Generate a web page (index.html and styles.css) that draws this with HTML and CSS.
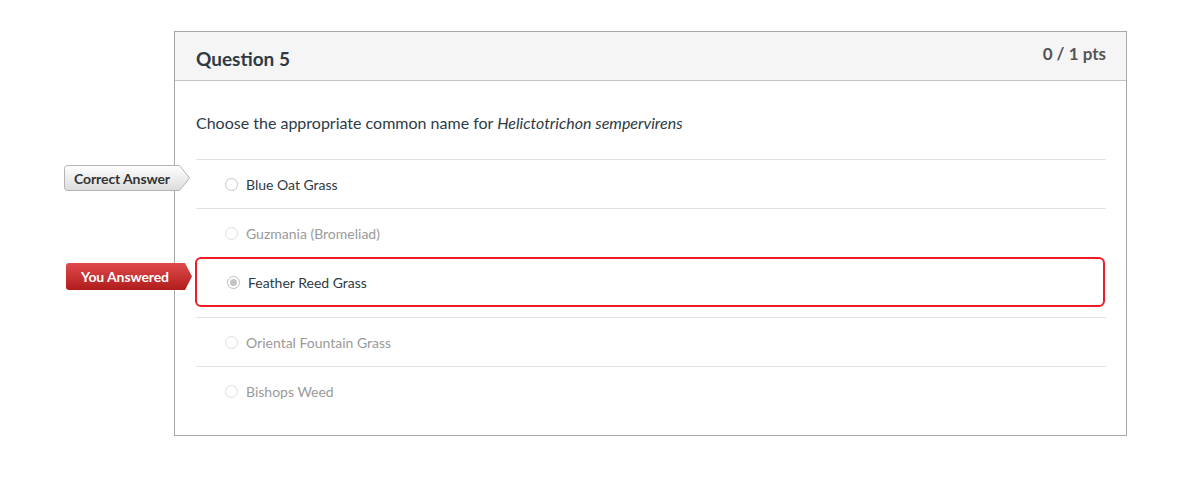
FILE: index.html
```html
<!DOCTYPE html>
<html>
<head>
<meta charset="utf-8">
<link rel="stylesheet" href="styles.css">
</head>
<body>
<div class="page">
  <div class="question">
    <div class="header">
      <h2 class="title">Question 5</h2>
      <div class="pts">0 / 1 pts</div>
    </div>
    <div class="body">
      <p class="prompt">Choose the appropriate common name for <em>Helictotrichon sempervirens</em></p>
      <div class="answers">
        <div class="answer correct">
          <div class="flag flag-correct">
            <svg class="flag-shape" width="126" height="26" viewBox="0 0 126 26">
              <defs>
                <linearGradient id="gc" x1="0" y1="0" x2="0" y2="1">
                  <stop offset="0" stop-color="#ffffff"/>
                  <stop offset="1" stop-color="#dcdcdc"/>
                </linearGradient>
              </defs>
              <path d="M3.5,0.5 H115.5 L125.5,13 L115.5,25.5 H3.5 Q0.5,25.5 0.5,22.5 V3.5 Q0.5,0.5 3.5,0.5 Z" fill="url(#gc)" stroke="#b4b4b4"/>
            </svg>
            <span class="flag-text">Correct Answer</span>
          </div>
          <span class="radio"></span><span class="label">Blue Oat Grass</span>
        </div>
        <div class="answer muted"><span class="radio"></span><span class="label">Guzmania (Bromeliad)</span></div>
        <div class="answer wrong">
          <div class="flag flag-wrong">
            <svg class="flag-shape" width="126" height="27" viewBox="0 0 126 27">
              <defs>
                <linearGradient id="gw" x1="0" y1="0" x2="0" y2="1">
                  <stop offset="0" stop-color="#e04a4a"/>
                  <stop offset="1" stop-color="#b01c1c"/>
                </linearGradient>
              </defs>
              <path d="M3,0 H119 L126,13.5 L119,27 H3 Q0,27 0,24 V3 Q0,0 3,0 Z" fill="url(#gw)"/>
            </svg>
            <span class="flag-text">You Answered</span>
          </div>
          <span class="radio checked"></span><span class="label">Feather Reed Grass</span>
        </div>
        <div class="answer muted"><span class="radio"></span><span class="label">Oriental Fountain Grass</span></div>
        <div class="answer muted"><span class="radio"></span><span class="label">Bishops Weed</span></div>
      </div>
    </div>
  </div>
</div>
</body>
</html>
```

FILE: styles.css
```css
* { box-sizing: border-box; }
html, body { margin: 0; padding: 0; background: #fff; }
body { font-family: Lato, "Open Sans", sans-serif; color: #2d3b45; }

.page { padding: 31px 0 0 174px; }

.question {
  width: 953px;
  border: 1px solid #a7a7a7;
}

.header {
  height: 49px;
  background: #f5f5f5;
  border-bottom: 1px solid #c3c3c3;
  display: flex;
  justify-content: space-between;
  align-items: flex-start;
  padding: 0 20px 0 21px;
}
.title {
  margin: 0;
  padding-top: 15px;
  font-size: 19px;
  font-weight: 700;
  line-height: 24px;
  color: #2d3b45;
}
.pts {
  padding-top: 12px;
  font-size: 17px;
  font-weight: 700;
  line-height: 20px;
  color: #555;
}

.body { padding: 0 20px 20px 21px; }
.prompt {
  margin: 0;
  height: 78px;
  padding-top: 32px;
  font-size: 16px;
  line-height: 20px;
}

.answer {
  position: relative;
  height: 49px;
  border-top: 1px solid #e2e2e2;
  display: flex;
  align-items: center;
  padding-left: 29px;
  font-size: 14px;
}
.answer.muted { color: #9a9a9a; }
.answer.wrong {
  height: 50px;
  border: 2px solid #ee1c26;
  border-radius: 6px;
  margin: 0 1px 10px -1px;
  padding: 1px 0 0 30px;
}

.radio {
  width: 13px;
  height: 13px;
  border-radius: 50%;
  border: 1px solid #c8c8c8;
  background: #fff;
  margin-right: 8px;
  display: inline-flex;
  align-items: center;
  justify-content: center;
}
.muted .radio { border-color: #dedede; }
.radio.checked { border-color: #bdbdbd; }
.radio.checked::after {
  content: "";
  width: 7px;
  height: 7px;
  border-radius: 50%;
  background: #c4c4c4;
}

.flag {
  position: absolute;
  display: flex;
  align-items: center;
  justify-content: center;
}
.flag-shape { position: absolute; left: 0; top: 0; }
.flag-text {
  position: relative;
  font-size: 14px;
  font-weight: 700;
  letter-spacing: -0.1px;
}
.flag-correct {
  left: -132px;
  top: 5px;
  width: 126px;
  height: 26px;
  padding-right: 10px;
  color: #333;
}
.flag-wrong {
  left: -131px;
  top: 4px;
  width: 126px;
  height: 27px;
  padding-right: 8px;
  color: #fff;
}
```
